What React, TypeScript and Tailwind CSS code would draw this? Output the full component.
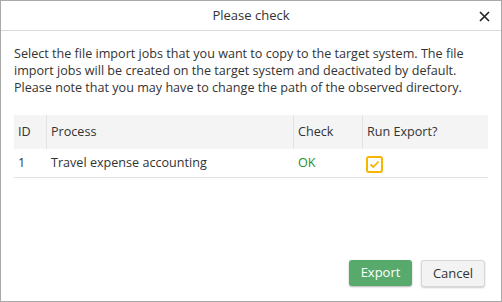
import React from "react";

export default function App() {
  return (
    <div
      className="w-[502px] h-[302px] bg-white border border-[#a9a9a9] flex flex-col text-[#333] text-[12.6px]"
      style={{ fontFamily: '"Open Sans", sans-serif' }}
    >
      <div className="h-[30px] shrink-0 border-b border-[#d9d9d9] relative flex items-center justify-center">
        <span className="text-[13px] leading-none">Please check</span>
        <button className="absolute right-[10px] top-[8px] w-[14px] h-[14px] flex items-center justify-center text-[#222]">
          <svg width="11" height="11" viewBox="0 0 11 11">
            <path d="M1 1L10 10M10 1L1 10" stroke="currentColor" strokeWidth="1.6" />
          </svg>
        </button>
      </div>
      <div className="flex-1 flex flex-col px-[13px] pt-[14px] pb-[14px]">
        <p className="leading-[17px]">
          Select the file import jobs that you want to copy to the target system. The file import jobs will be created on the target system and deactivated by default. Please note that you may have to change the path of the observed directory.
        </p>
        <div className="mt-[19px] w-[474px]">
          <div className="flex h-[34px] bg-[#f4f4f4] items-center">
            <div className="w-[32px] pl-[4px]">ID</div>
            <div className="w-[247px] h-full flex items-center pl-[4px] border-l border-[#e2e2e2]">Process</div>
            <div className="w-[69px] h-full flex items-center pl-[4px] border-l border-[#e2e2e2]">Check</div>
            <div className="flex-1 h-full flex items-center pl-[4px] border-l border-[#e2e2e2]">Run Export?</div>
          </div>
          <div className="flex h-[29px] items-center border-b border-[#e2e2e2]">
            <div className="w-[32px] pl-[4px]">1</div>
            <div className="w-[247px] pl-[5px]">Travel expense accounting</div>
            <div className="w-[69px] pl-[5px] text-[#22922a]">OK</div>
            <div className="flex-1 pl-[4px] pt-[2px] flex items-center">
              <span className="w-[17px] h-[17px] rounded-[3px] border-2 border-[#f7b500] flex items-center justify-center">
                <svg width="11" height="9" viewBox="0 0 11 9">
                  <path d="M1.5 4.5L4.3 7L9.5 1.5" fill="none" stroke="#f7b500" strokeWidth="1.8" />
                </svg>
              </span>
            </div>
          </div>
        </div>
        <div className="mt-auto flex justify-end gap-[9px] pr-[3px]">
          <button className="h-[26px] w-[63px] rounded-[3px] bg-[#58a96c] text-white text-[13px] shadow-[0_1px_2px_rgba(0,0,0,0.3)]">
            Export
          </button>
          <button className="h-[27px] w-[64px] rounded-[3px] bg-[#f3f3f3] border border-[#d6d6d6] text-[#333] text-[13px] shadow-[0_1px_2px_rgba(0,0,0,0.2)]">
            Cancel
          </button>
        </div>
      </div>
    </div>
  );
}
